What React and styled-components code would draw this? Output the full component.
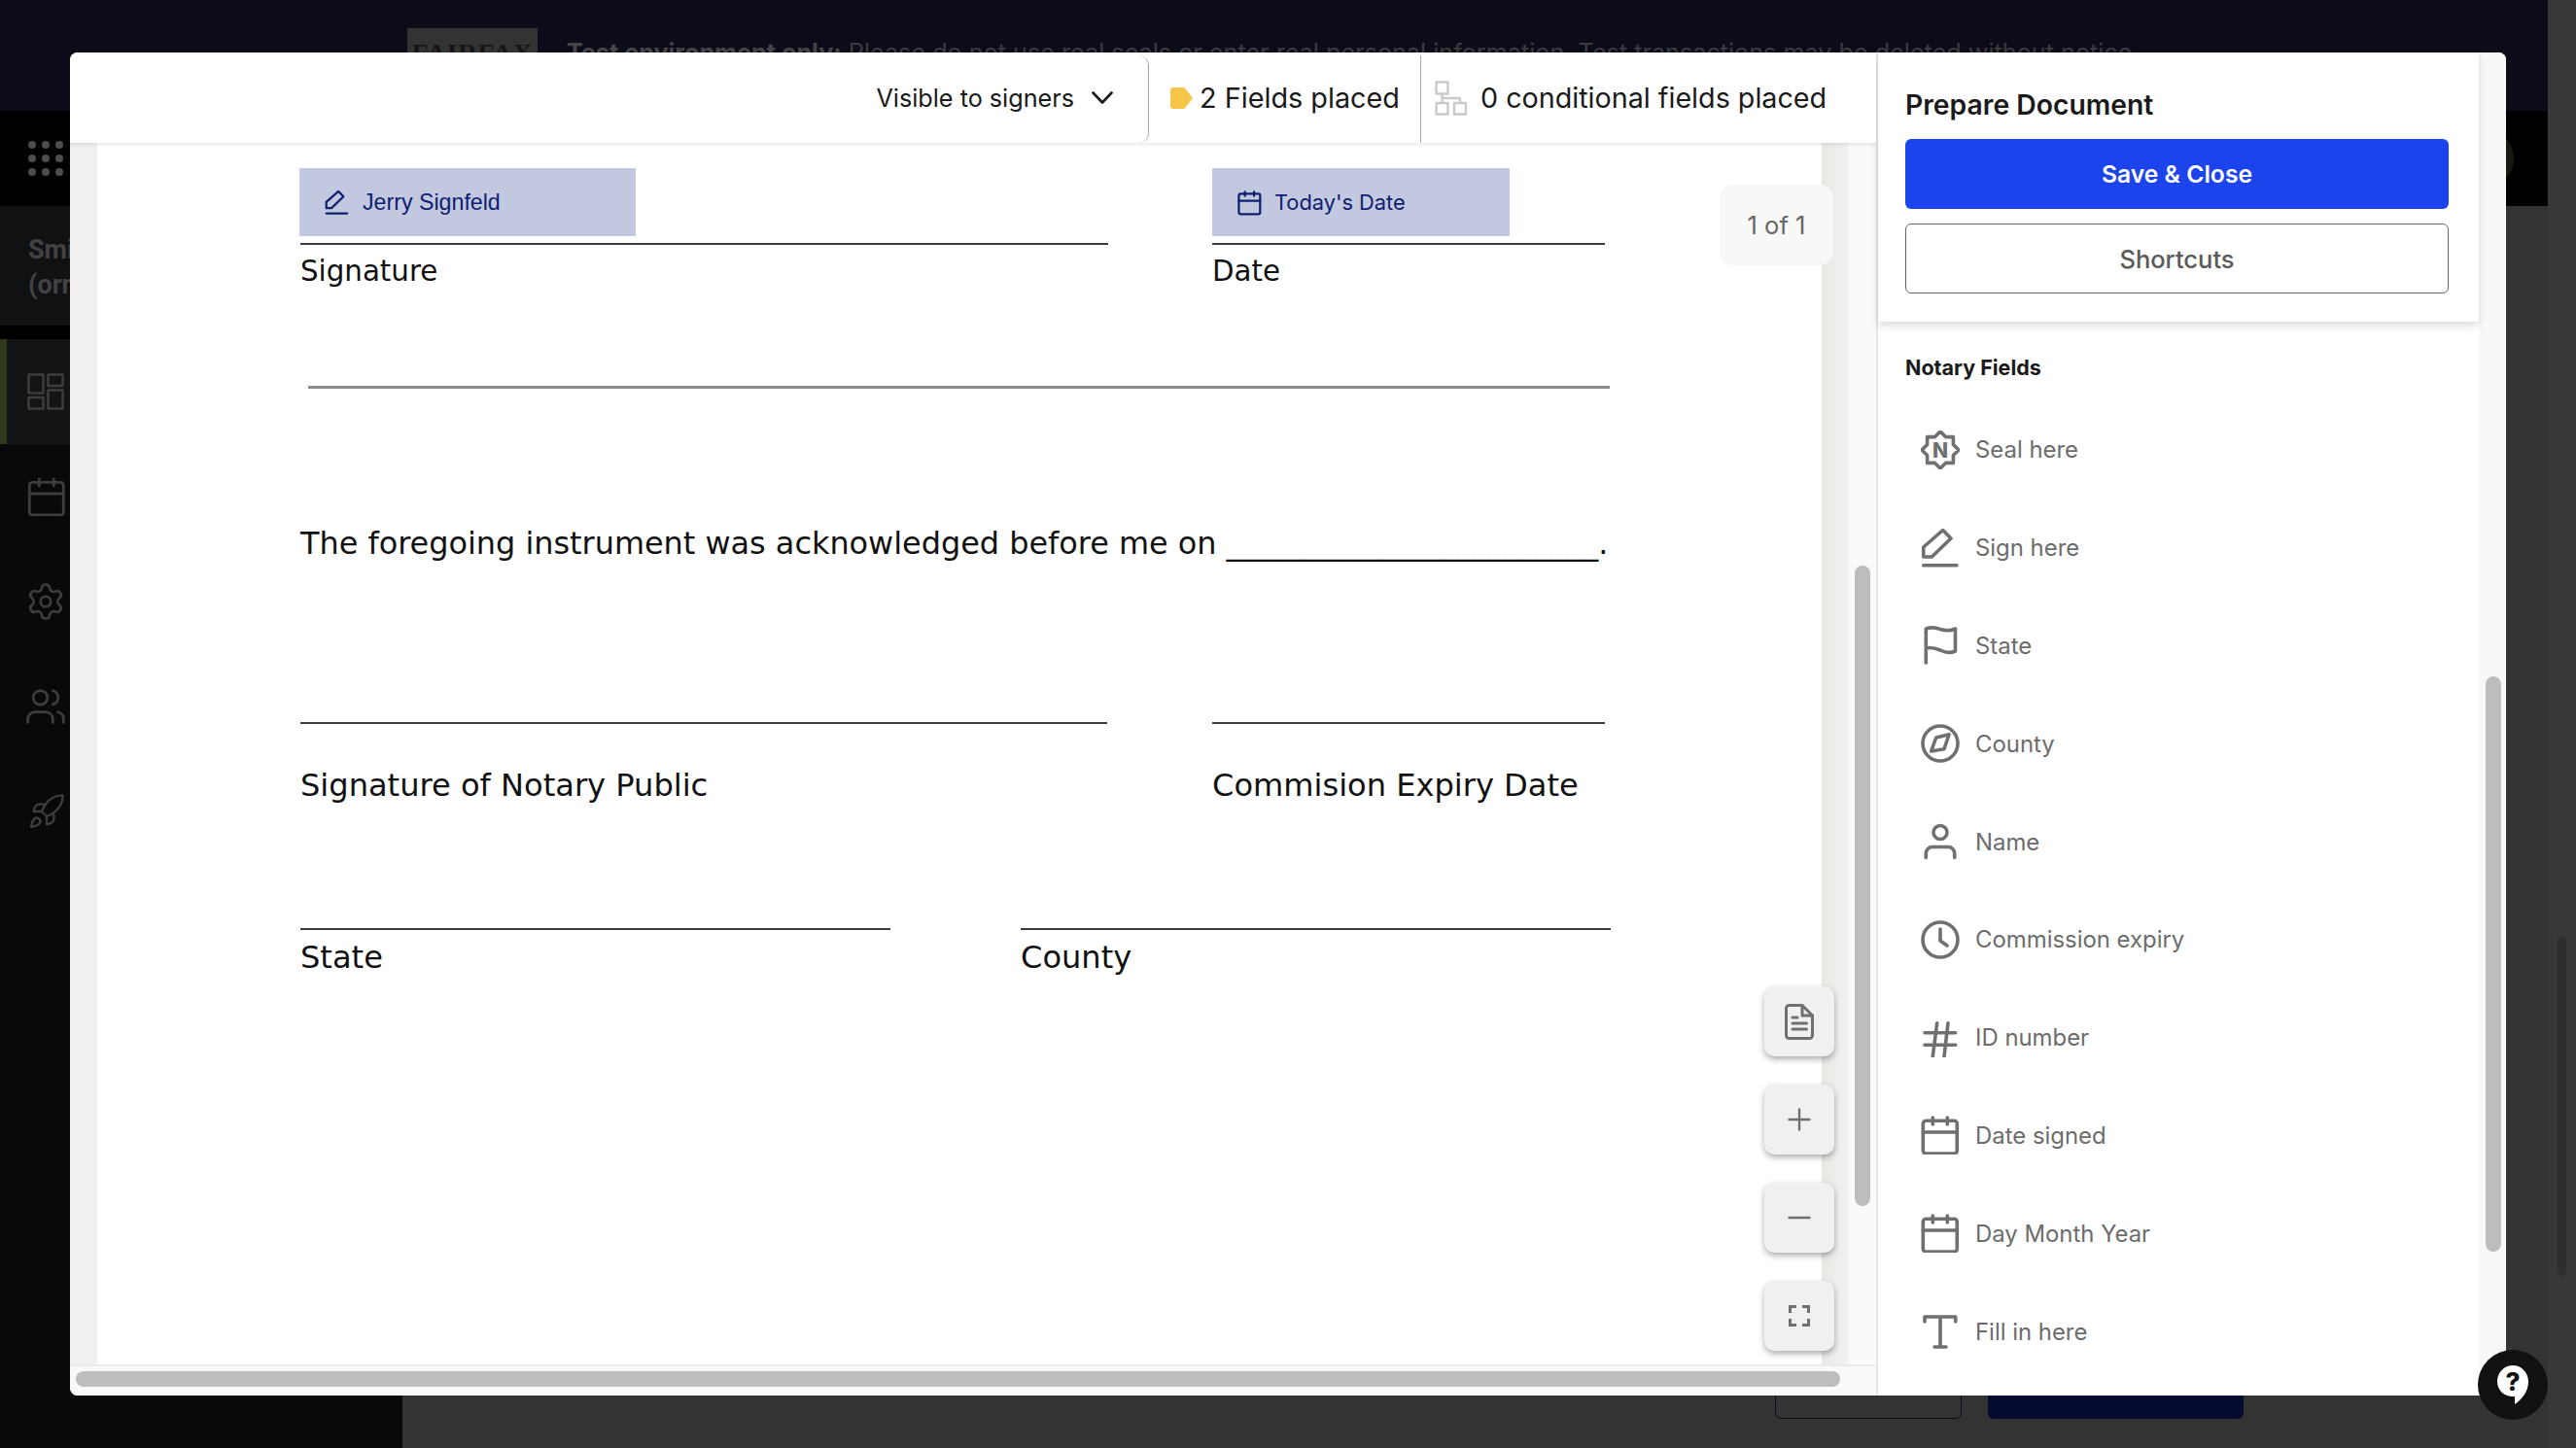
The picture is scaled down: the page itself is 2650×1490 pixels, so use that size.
import React from "react";
import styled, { createGlobalStyle } from "styled-components";
import { Settings, Users, Rocket } from "lucide-react";

const Global = createGlobalStyle`
  html, body { margin: 0; padding: 0; background: #333; }
  * { box-sizing: border-box; }
  body { font-family: Inter, "Liberation Sans", sans-serif; }
`;

const Stage = styled.div`
  position: relative;
  width: 2650px;
  height: 1490px;
  overflow: hidden;
  display: flex;
`;
const Backdrop = styled.div`
  width: 2621px;
  height: 1490px;
  display: flex;
  flex-direction: column;
`;
const PageScroll = styled.div`
  width: 29px;
  height: 1490px;
  background: #383838;
  padding: 964px 10px 0;
`;
const PageThumb = styled.div`
  width: 9px;
  height: 349px;
  border-radius: 5px;
  background: #2e2e2e;
`;
const Banner = styled.div`
  height: 114px;
  flex: none;
  background: #0c0c18;
  display: flex;
  align-items: center;
  padding-left: 419px;
  gap: 30px;
  color: #3a3a40;
  font-size: 25.2px;
  white-space: nowrap;
`;
const LogoBox = styled.div`
  width: 134px;
  height: 56px;
  background: #333;
  color: #161616;
  font: bold 27px "Liberation Serif", serif;
  display: flex;
  align-items: center;
  justify-content: center;
  letter-spacing: 1px;
  padding-bottom: 3px;
`;
const BannerText = styled.span`
  padding-bottom: 6px;
  b { font-weight: 700; color: #444449; }
`;
const NavBar = styled.div`
  height: 98px;
  flex: none;
  background: #000;
  display: flex;
  align-items: center;
  justify-content: space-between;
  padding: 0 0 0 29px;
`;
const AppGrid = styled.div`
  display: grid;
  grid-template-columns: repeat(3, 8px);
  gap: 6px;
`;
const AppDot = styled.i`
  width: 8px;
  height: 8px;
  border-radius: 50%;
  background: #4c4c4c;
`;
const Avatar = styled.div`
  width: 60px;
  height: 60px;
  margin-right: 35px;
  border-radius: 50%;
  background: #171a10;
`;
const BodyRow = styled.div`
  flex: 1;
  display: flex;
`;
const Sidebar = styled.div`
  width: 414px;
  background: #07090b;
  display: flex;
  flex-direction: column;
`;
const OrgBlock = styled.div`
  height: 137px;
  background: #0f1113;
  padding: 27px 0 0 29px;
  font: bold 27px/36px Roboto, sans-serif;
  color: #424242;
  border-bottom: 14px solid #000;
`;
const NavItem = styled.div`
  height: 108px;
  display: flex;
  align-items: center;
  padding-left: ${(p) => (p.$active ? 21 : 28)}px;
  color: #3d3d3d;
  background: ${(p) => (p.$active ? "#131416" : "transparent")};
  border-left: ${(p) => (p.$active ? "7px solid #2e3a1e" : "0")};
`;
const MainArea = styled.div`
  flex: 1;
  background: #333;
  display: flex;
  align-items: flex-end;
  justify-content: flex-end;
  gap: 27px;
  padding: 0 313px 30px 0;
`;
const GhostBtn = styled.div`
  width: 192px;
  height: 70px;
  border: 1px solid #0a0a20;
  border-radius: 6px;
`;
const NavyBtn = styled.div`
  width: 263px;
  height: 70px;
  background: #050b30;
  border-radius: 6px;
`;

const Modal = styled.div`
  position: absolute;
  left: 72px;
  top: 54px;
  width: 2506px;
  height: 1382px;
  background: #fff;
  border-radius: 8px;
  overflow: hidden;
  display: flex;
`;
const LeftCol = styled.div`
  width: 1858px;
  display: flex;
  flex-direction: column;
`;
const Header = styled.div`
  height: 93px;
  flex: none;
  display: flex;
  background: #fff;
  position: relative;
  z-index: 2;
  box-shadow: 0 3px 2px rgba(0, 0, 0, 0.06);
  color: #1a1a1a;
`;
const VisibleBox = styled.div`
  flex: 1;
  display: flex;
  align-items: center;
  justify-content: flex-end;
  gap: 18px;
  padding-right: 36px;
  font-size: 25.2px;
  border-right: 1px solid #aaa;
  border-radius: 0 10px 10px 0;
  margin-top: 3px;
  padding-bottom: 3px;
`;
const PlacedBox = styled.div`
  width: 280px;
  flex: none;
  display: flex;
  align-items: center;
  gap: 7px;
  padding-left: 22px;
  font-size: 28.8px;
  white-space: nowrap;
  border-right: 1px solid #aaa;
  margin-top: 3px;
  padding-bottom: 3px;
`;
const ConditionalBox = styled.div`
  width: 468px;
  flex: none;
  display: flex;
  align-items: center;
  gap: 14px;
  padding-left: 14px;
  font-size: 28.7px;
  white-space: nowrap;
`;
const DocArea = styled.div`
  flex: 1;
  position: relative;
  display: flex;
  min-height: 0;
  background: #f0f1ee;
`;
const DocGutter = styled.div`
  width: ${(p) => p.$w}px;
  flex: none;
  background: ${(p) => (p.$shade ? "linear-gradient(90deg,#e8e9e5,#f1f2ef)" : "#f0f1ee")};
`;
const DocPage = styled.div`
  flex: 1;
  position: relative;
  background: #fff;
  padding: 103px 0 0 209px;
  font: 31.9px/34px "DejaVu Sans", sans-serif;
  color: #111;
`;
const VTrack = styled.div`
  width: 29px;
  flex: none;
  background: #fafafa;
  padding: 435px 6px 0 7px;
`;
const VThumb = styled.div`
  width: 16px;
  height: ${(p) => p.$h}px;
  border-radius: 8px;
  background: #bdbdbd;
`;
const LineRow = styled.div`
  display: flex;
  margin-top: ${(p) => p.$top || 0}px;
  margin-left: ${(p) => p.$left || 0}px;
  gap: ${(p) => p.$gap || 0}px;
`;
const LineCol = styled.div`
  width: ${(p) => p.$w}px;
  flex: none;
`;
const Rule = styled.div`
  height: ${(p) => p.$h || 2}px;
  background: ${(p) => p.$c || "#3c3c3c"};
`;
const DocLabel = styled.div`
  margin-top: ${(p) => p.$top || 10}px;
  white-space: nowrap;
  font-size: ${(p) => p.$size || 32.1}px;
`;
const Sentence = styled.div`
  margin-top: ${(p) => p.$top}px;
  white-space: nowrap;
`;
const PlacedField = styled.div`
  position: absolute;
  top: 26px;
  left: ${(p) => p.$left}px;
  width: ${(p) => p.$w}px;
  height: 70px;
  background: #c1c8df;
  color: #0f2070;
  display: flex;
  align-items: center;
  gap: ${(p) => p.$gap}px;
  padding-left: ${(p) => p.$pad}px;
  font: ${(p) => p.$font};
  white-space: nowrap;
`;
const PageCounter = styled.div`
  position: absolute;
  left: 1697px;
  top: 43px;
  width: 117px;
  height: 83px;
  border-radius: 14px;
  background: #f8f8f6;
  color: #666;
  font-size: 25.5px;
  display: flex;
  align-items: center;
  justify-content: center;
`;
const FloatStack = styled.div`
  position: absolute;
  left: 1743px;
  top: 868px;
  display: flex;
  flex-direction: column;
  gap: 29px;
`;
const FloatBtn = styled.div`
  width: 72px;
  height: 72px;
  border-radius: 10px;
  background: #f0f1ee;
  box-shadow: 0 3px 6px rgba(0, 0, 0, 0.32);
  display: flex;
  align-items: center;
  justify-content: center;
`;
const HTrack = styled.div`
  height: 32px;
  flex: none;
  background: #f9f9f9;
  border-top: 2px solid #ececec;
  padding: 5px 0 0 6px;
`;
const HThumb = styled.div`
  width: 1815px;
  height: 16px;
  border-radius: 8px;
  background: #bdbdbd;
`;
const RightCol = styled.div`
  flex: 1;
  display: flex;
  border-left: 2px solid #e6e6e6;
  background: #fff;
`;
const Panel = styled.div`
  width: 618px;
  flex: none;
  display: flex;
  flex-direction: column;
`;
const PanelTop = styled.div`
  height: 277px;
  flex: none;
  padding: 36px 31px 0 28px;
  background: #fff;
  box-shadow: 0 4px 8px rgba(0, 0, 0, 0.14);
  display: flex;
  flex-direction: column;
  position: relative;
`;
const PanelTitle = styled.div`
  font-size: 28.3px;
  font-weight: 600;
  line-height: 36px;
  color: #1a1a1a;
  margin-bottom: 17px;
`;
const PrimaryBtn = styled.div`
  height: 72px;
  border-radius: 6px;
  background: #1c44ed;
  color: #fff;
  font-size: 24.7px;
  font-weight: 600;
  display: flex;
  align-items: center;
  justify-content: center;
  margin-bottom: 15px;
`;
const OutlineBtn = styled.div`
  height: 72px;
  border-radius: 6px;
  border: 1px solid #666;
  color: #5a5a5a;
  font-size: 25.5px;
  font-weight: 500;
  display: flex;
  align-items: center;
  justify-content: center;
`;
const SectionLabel = styled.div`
  padding: 33px 0 0 28px;
  font-size: 21.5px;
  font-weight: 700;
  line-height: 28px;
  color: #1a1a1a;
  margin-bottom: 20.5px;
`;
const FieldRow = styled.div`
  height: 100.8px;
  flex: none;
  display: flex;
  align-items: center;
  gap: 16px;
  padding-left: 44px;
  color: #6c6c6c;
  font-size: 23.9px;
`;
const PanelTrack = styled.div`
  flex: 1;
  background: #f8f8f8;
  padding: 642px 5px 0 7px;
`;
const HelpBtn = styled.div`
  position: absolute;
  left: 2549px;
  top: 1389px;
  width: 72px;
  height: 72px;
  border-radius: 50%;
  background: #111;
  display: flex;
  align-items: center;
  justify-content: center;
`;

const Ico = styled.svg`
  flex: none;
  display: block;
  fill: none;
  stroke: currentColor;
  stroke-linecap: round;
  stroke-linejoin: round;
`;

const star = (() => {
  const pts = [];
  for (let i = 0; i < 16; i++) {
    const r = i % 2 === 0 ? 19 : 14.5;
    const a = (Math.PI * i) / 8 - Math.PI / 2;
    pts.push(`${(20 + r * Math.cos(a)).toFixed(1)},${(20 + r * Math.sin(a)).toFixed(1)}`);
  }
  return pts.join(" ");
})();

const FieldIcon = ({ children }) => (
  <Ico width="40" height="40" viewBox="0 0 40 40" strokeWidth="3.6" style={{ color: "#707070" }}>
    {children}
  </Ico>
);

const CalendarShape = () => (
  <>
    <rect x="2.3" y="5.3" width="35" height="33.7" rx="3" />
    <path d="M2.3 17h35M12.3 2v7M27.3 2v7" />
  </>
);

const fields = [
  ["Seal here", <>
    <polygon points={star} />
    <text x="20" y="27.500" textAnchor="middle" fontFamily="Inter, sans-serif" fontWeight="800" fontSize="21" fill="#707070" stroke="none">N</text>
  </>],
  ["Sign here", <path d="M2.700 29V19L22.700 1.500 31 10 11.300 29ZM2.700 37.700H37" />],
  ["State", <path d="M5.300 38V3C11 1 16 2 20 3.500 25 5 30 5.500 35.500 3V26C30 28.500 25 27.500 20 25 15 23 10 21.500 5.300 23" />],
  ["County", <>
    <circle cx="20" cy="20" r="18" />
    <path d="M29 10.700 24 25.700 10.700 28 15.700 14Z" />
  </>],
  ["Name", <>
    <circle cx="20" cy="10.500" r="7" />
    <path d="M5.300 36.500V32c0-3.500 3-6.500 6.500-6.500h16.400c3.500 0 6.500 3 6.500 6.500v4.500" />
  </>],
  ["Commission expiry", <>
    <circle cx="20" cy="20" r="18" />
    <path d="M20 9V21L27 26" />
  </>],
  ["ID number", <path d="M4 14.700H35.700M4 27.300H35.700M16.700 4.700 12.300 39M28 4.700 24 39" />],
  ["Date signed", <CalendarShape />],
  ["Day Month Year", <CalendarShape />],
  ["Fill in here", <path d="M4 10V5H35.700V10M20 5V36M14 36H26" />],
];

export default function App() {
  return (
    <Stage>
      <Global />
      <Backdrop>
        <Banner>
          <LogoBox>FAIRFAX</LogoBox>
          <BannerText>
            <b>Test environment only:</b> Please do not use real seals or enter real personal information. Test transactions may be deleted without notice.
          </BannerText>
        </Banner>
        <NavBar>
          <AppGrid>
            {Array.from({ length: 9 }).map((_, i) => (
              <AppDot key={i} />
            ))}
          </AppGrid>
          <Avatar />
        </NavBar>
        <BodyRow>
          <Sidebar>
            <OrgBlock>
              Smith
              <br />
              (orn)
            </OrgBlock>
            <NavItem $active>
              <Ico width="38" height="38" viewBox="0 0 38 38" strokeWidth="2.5">
                <rect x="1.500" y="1.500" width="15" height="19" />
                <rect x="1.500" y="25" width="15" height="11.500" />
                <rect x="21.500" y="1.500" width="15" height="11.500" />
                <rect x="21.500" y="17.500" width="15" height="19" />
              </Ico>
            </NavItem>
            <NavItem>
              <Ico width="40" height="40" viewBox="0 0 40 40" strokeWidth="2.8">
                <CalendarShape />
              </Ico>
            </NavItem>
            <NavItem>
              <Settings size={42} strokeWidth={1.5} style={{ marginLeft: -2 }} />
            </NavItem>
            <NavItem>
              <Users size={44} strokeWidth={1.5} style={{ marginLeft: -3 }} />
            </NavItem>
            <NavItem>
              <Rocket size={40} strokeWidth={1.4} />
            </NavItem>
          </Sidebar>
          <MainArea>
            <GhostBtn />
            <NavyBtn />
          </MainArea>
        </BodyRow>
      </Backdrop>
      <PageScroll>
        <PageThumb />
      </PageScroll>

      <Modal>
        <LeftCol>
          <Header>
            <VisibleBox>
              Visible to signers
              <Ico width="22" height="13" viewBox="0 0 22 13" strokeWidth="2.6">
                <path d="M1.500 1.500 11 11.500 20.500 1.500" />
              </Ico>
            </VisibleBox>
            <PlacedBox>
              <svg width="23" height="22" viewBox="0 0 23 22">
                <path d="M3 0H14.500L23 11 14.500 22H3A3 3 0 0 1 0 19V3A3 3 0 0 1 3 0Z" fill="#f7c548" />
              </svg>
              2 Fields placed
            </PlacedBox>
            <ConditionalBox>
              <Ico width="33" height="36" viewBox="0 0 33 36" strokeWidth="2.4" style={{ color: "#c9c9c9" }}>
                <rect x="1.500" y="1.500" width="12" height="12" />
                <rect x="1.500" y="23" width="12" height="11.500" />
                <rect x="20" y="23" width="12" height="11.500" />
                <path d="M7.500 13.500V23M7.500 18H26V23" />
              </Ico>
              0 conditional fields placed
            </ConditionalBox>
          </Header>
          <DocArea>
            <DocGutter $w={28} />
            <DocPage>
              <PlacedField $left={208} $w={346} $gap={14} $pad={26} $font={'23.2px "Liberation Sans", sans-serif'}>
                <Ico width="25" height="27" viewBox="0 0 40 40" strokeWidth="3.6">
                  <path d="M2.700 29V19L22.700 1.500 31 10 11.300 29ZM2.700 37.700H37" />
                </Ico>
                Jerry Signfeld
              </PlacedField>
              <PlacedField $left={1147} $w={306} $gap={13} $pad={26} $font={"21.8px/66px Inter, sans-serif"}>
                <Ico width="25" height="27" viewBox="0 0 40 40" strokeWidth="3.6">
                  <CalendarShape />
                </Ico>
                Today's Date
              </PlacedField>
              <LineRow $gap={107}>
                <LineCol $w={831}>
                  <Rule />
                  <DocLabel $size={29.3}>Signature</DocLabel>
                </LineCol>
                <LineCol $w={404}>
                  <Rule />
                  <DocLabel $size={29.3}>Date</DocLabel>
                </LineCol>
              </LineRow>
              <LineRow $top={101} $left={8}>
                <LineCol $w={1339}>
                  <Rule $h={3} $c="#8a8a8a" />
                </LineCol>
              </LineRow>
              <Sentence $top={142}>The foregoing instrument was acknowledged before me on ________________________.</Sentence>
              <LineRow $top={167} $gap={108}>
                <LineCol $w={830}>
                  <Rule />
                  <DocLabel $top={46}>Signature of Notary Public</DocLabel>
                </LineCol>
                <LineCol $w={404}>
                  <Rule />
                  <DocLabel $top={46}>Commision Expiry Date</DocLabel>
                </LineCol>
              </LineRow>
              <LineRow $top={130} $gap={134}>
                <LineCol $w={607}>
                  <Rule />
                  <DocLabel $top={11}>State</DocLabel>
                </LineCol>
                <LineCol $w={607}>
                  <Rule />
                  <DocLabel $top={11}>County</DocLabel>
                </LineCol>
              </LineRow>
            </DocPage>
            <DocGutter $w={27} $shade />
            <VTrack>
              <VThumb $h={659} />
            </VTrack>
            <PageCounter>1 of 1</PageCounter>
            <FloatStack>
              <FloatBtn>
                <Ico width="30" height="37" viewBox="0 0 30 37" strokeWidth="3" style={{ color: "#707070" }}>
                  <path d="M4.500 1.500H18L28.500 12V32.500a3 3 0 0 1-3 3H4.500a3 3 0 0 1-3-3V4.500a3 3 0 0 1 3-3Z" />
                  <path d="M18 1.500V12H28.500M8 14H13M8 20H22.500M8 26H22.500" />
                </Ico>
              </FloatBtn>
              <FloatBtn>
                <Ico width="24" height="24" viewBox="0 0 24 24" strokeWidth="2.4" style={{ color: "#707070" }}>
                  <path d="M12 1.500V22.500M1.500 12H22.500" />
                </Ico>
              </FloatBtn>
              <FloatBtn>
                <Ico width="24" height="4" viewBox="0 0 24 4" strokeWidth="2.4" style={{ color: "#707070" }}>
                  <path d="M1.500 2H22.500" />
                </Ico>
              </FloatBtn>
              <FloatBtn>
                <Ico width="22" height="22" viewBox="0 0 22 22" strokeWidth="3" style={{ color: "#707070", strokeLinecap: "butt", strokeLinejoin: "miter" }}>
                  <path d="M1.500 8V1.500H8M14 1.500H20.500V8M20.500 14V20.500H14M8 20.500H1.500V14" />
                </Ico>
              </FloatBtn>
            </FloatStack>
          </DocArea>
          <HTrack>
            <HThumb />
          </HTrack>
        </LeftCol>
        <RightCol>
          <Panel>
            <PanelTop>
              <PanelTitle>Prepare Document</PanelTitle>
              <PrimaryBtn>Save &amp; Close</PrimaryBtn>
              <OutlineBtn>Shortcuts</OutlineBtn>
            </PanelTop>
            <SectionLabel>Notary Fields</SectionLabel>
            {fields.map(([label, icon]) => (
              <FieldRow key={label}>
                <FieldIcon>{icon}</FieldIcon>
                {label}
              </FieldRow>
            ))}
          </Panel>
          <PanelTrack>
            <VThumb $h={592} />
          </PanelTrack>
        </RightCol>
      </Modal>

      <HelpBtn>
        <svg width="34" height="42" viewBox="0 0 34 42">
          <path d="M17 1C8 1 1 8.500 1 17.500S8 33 17 33c1 0 1.500 0 2-.1V41c6-4 14-12 14-23.500C33 8.500 26 1 17 1Z" fill="#fff" />
          <text x="17" y="27" textAnchor="middle" fontFamily="Inter, sans-serif" fontWeight="800" fontSize="26" fill="#111">?</text>
        </svg>
      </HelpBtn>
    </Stage>
  );
}
